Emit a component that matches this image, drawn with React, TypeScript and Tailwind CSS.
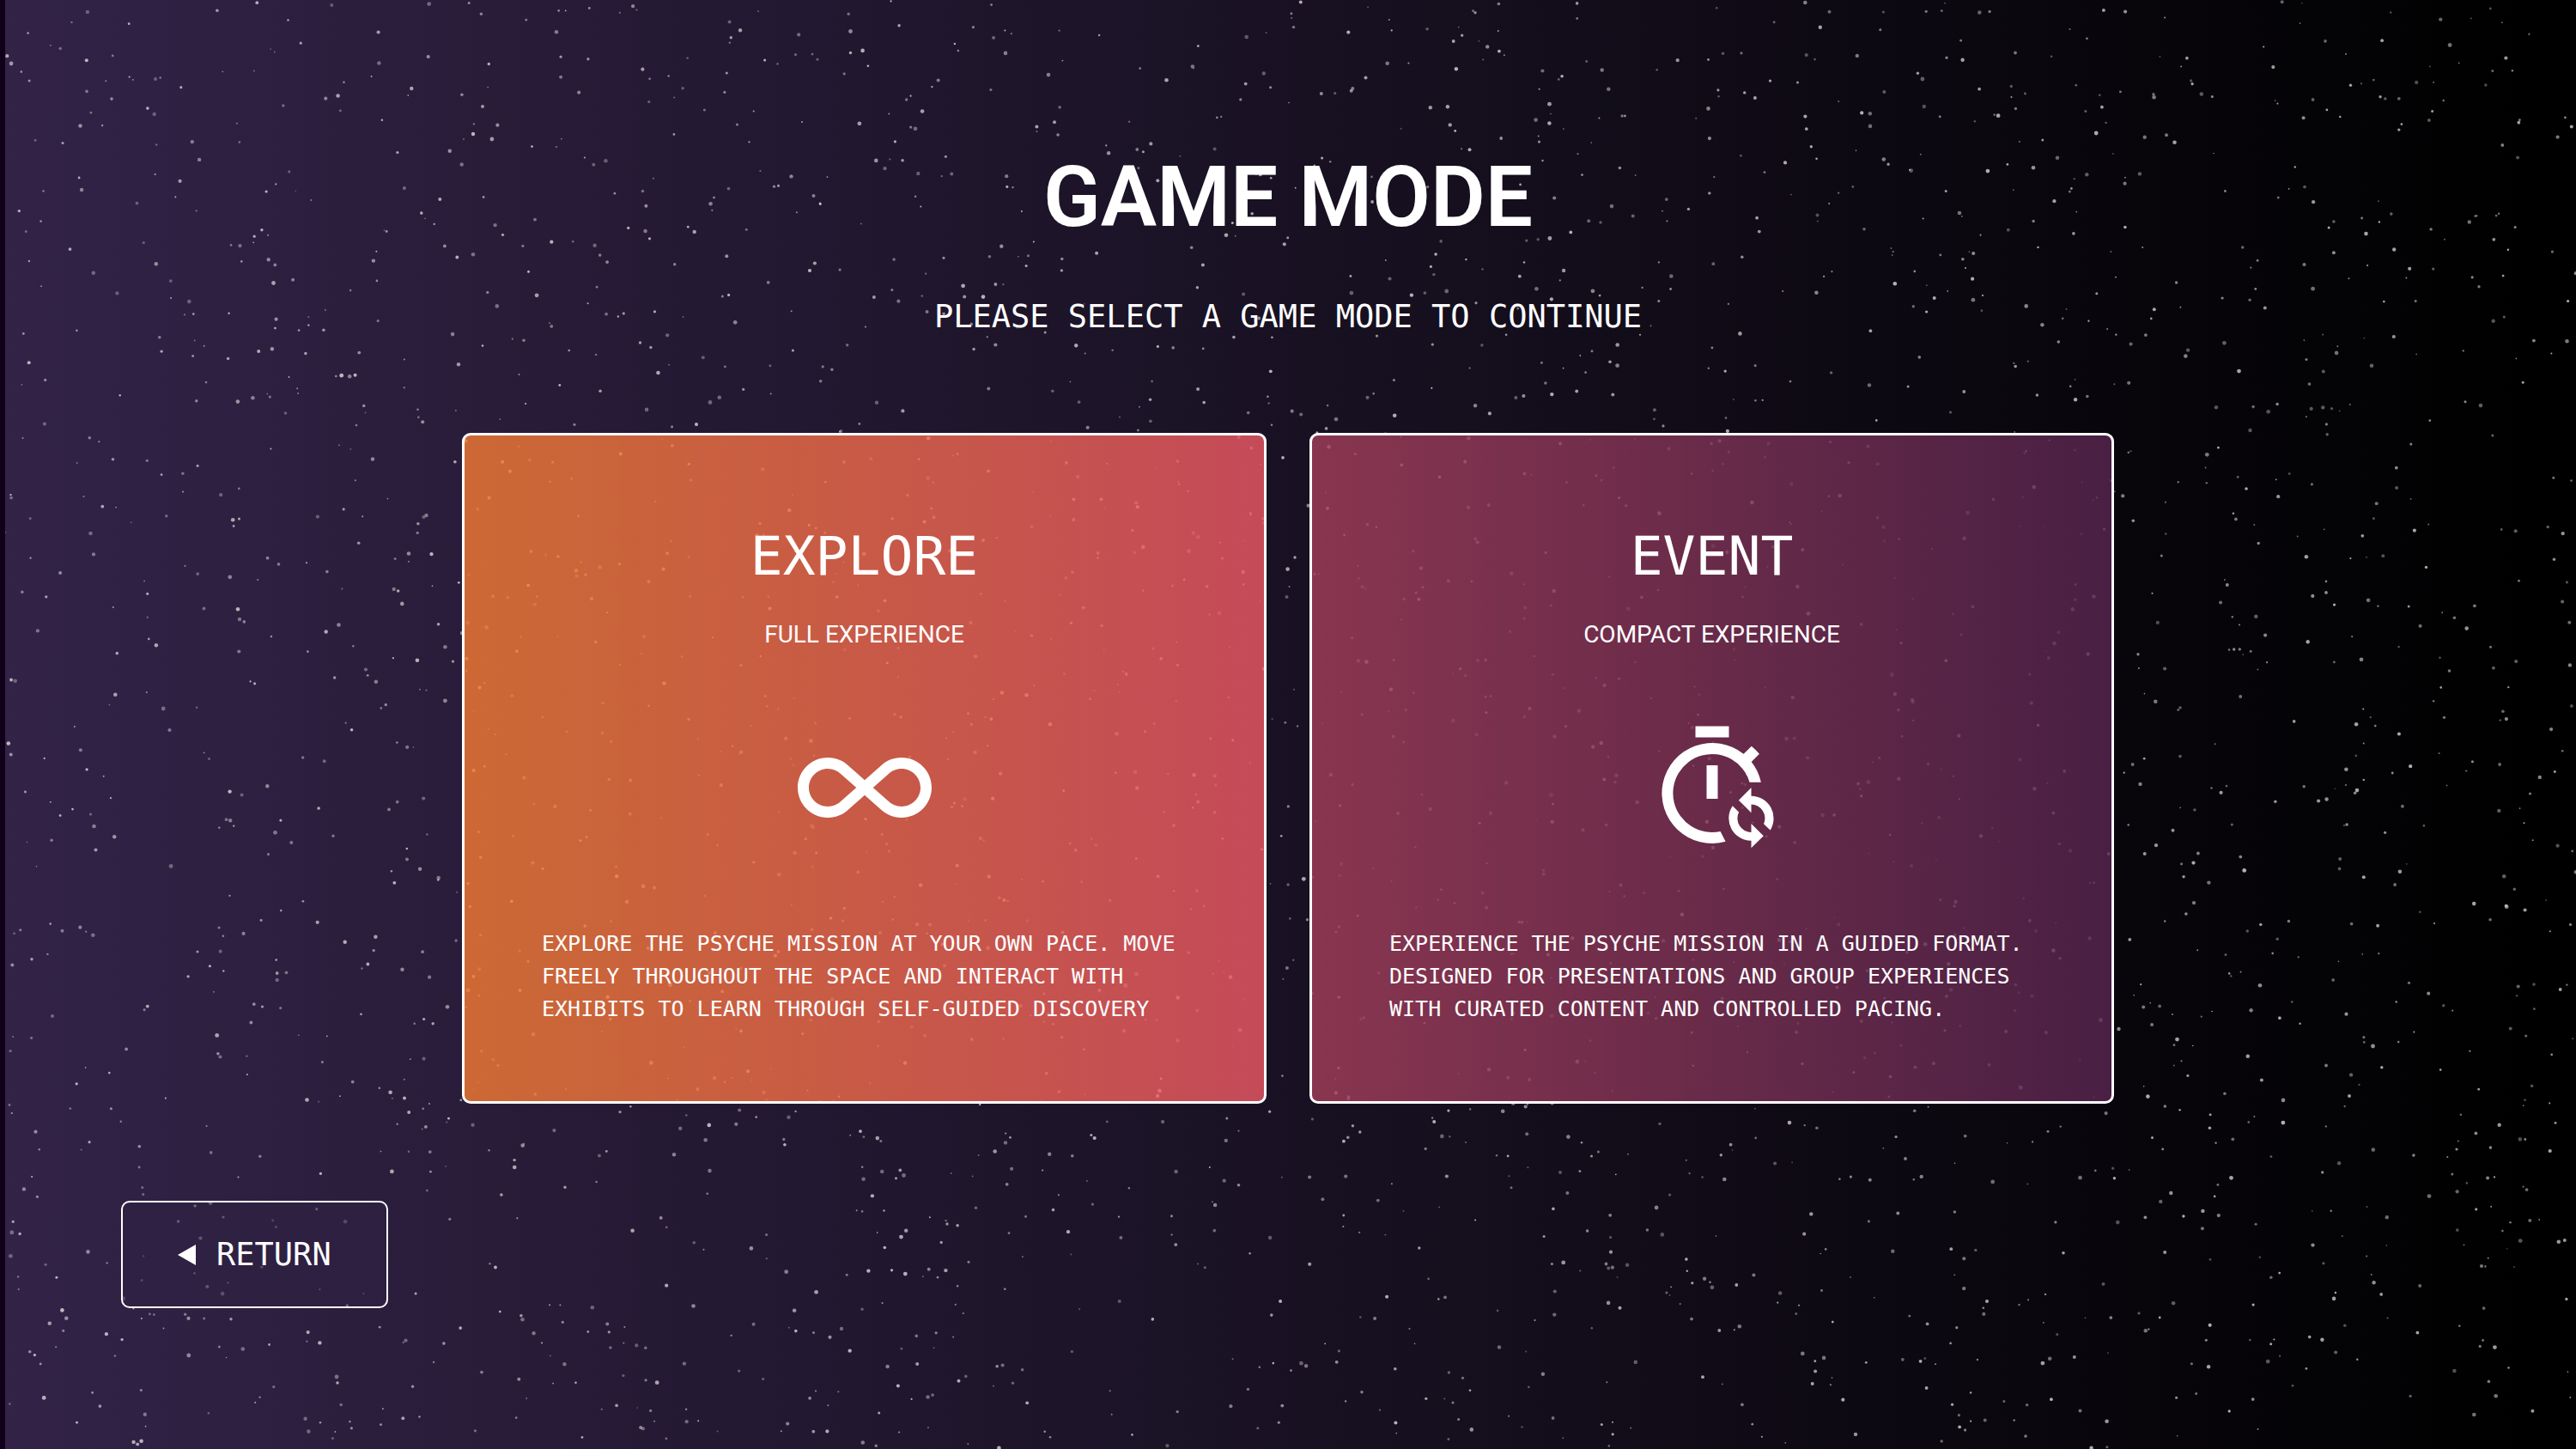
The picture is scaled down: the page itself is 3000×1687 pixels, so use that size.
import type { ReactNode } from "react";

type Star = { x: number; y: number; r: number; o: number };

const SKY_WIDTH = 3000;
const SKY_HEIGHT = 1687;

function makeStars(count: number): Star[] {
  let seed = 20260;
  const next = () => {
    seed = (seed * 1664525 + 1013904223) % 4294967296;
    return seed / 4294967296;
  };
  return Array.from({ length: count }, () => ({
    x: Math.round(next() * SKY_WIDTH * 10) / 10,
    y: Math.round(next() * SKY_HEIGHT * 10) / 10,
    r: Math.round((0.8 + next() * 1.6) * 10) / 10,
    o: Math.round((0.3 + next() * 0.4) * 100) / 100,
  }));
}

const stars = makeStars(3100);

function StarField() {
  return (
    <svg
      aria-hidden="true"
      className="pointer-events-none absolute inset-0 h-full w-full"
      viewBox={`0 0 ${SKY_WIDTH} ${SKY_HEIGHT}`}
      preserveAspectRatio="xMidYMid slice"
      fill="#fff8f6"
    >
      {stars.map((s, i) => (
        <circle key={i} cx={s.x} cy={s.y} r={s.r} opacity={s.o} />
      ))}
    </svg>
  );
}

function InfinityIcon() {
  return (
    <svg viewBox="0 0 24 24" className="size-[156px]" fill="currentColor" aria-hidden="true">
      <path d="M18.6 6.62C21.58 6.62 24 9 24 12C24 14.96 21.58 17.37 18.6 17.37C17.15 17.37 15.8 16.81 14.78 15.8L12 13.34L9.17 15.85C8.2 16.82 6.84 17.38 5.4 17.38C2.42 17.38 0 14.96 0 12C0 9.04 2.42 6.62 5.4 6.62C6.84 6.62 8.2 7.18 9.22 8.2L12 10.66L14.83 8.15C15.8 7.18 17.16 6.62 18.6 6.62M7.8 14.39L10.5 12L7.84 9.65C7.16 8.97 6.31 8.62 5.4 8.62C3.53 8.62 2 10.13 2 12C2 13.87 3.53 15.38 5.4 15.38C6.31 15.38 7.16 15.03 7.8 14.39M16.2 9.61L13.5 12L16.16 14.35C16.84 15.03 17.7 15.38 18.6 15.38C20.47 15.38 22 13.87 22 12C22 10.13 20.47 8.62 18.6 8.62C17.69 8.62 16.84 8.97 16.2 9.61Z" />
    </svg>
  );
}

function TimerSyncIcon() {
  return (
    <svg viewBox="0 0 24 24" className="size-[156px]" fill="currentColor" aria-hidden="true">
      <path d="M9 1h6v2H9z" />
      <path d="M11 8h2v6h-2z" />
      <path d="M20.75 11.03H18.7A7 7 0 1 0 13.47 19.84L14.4 21.67A9 9 0 1 1 17.62 5.98L19.04 4.56C19.55 4.98 20.02 5.46 20.45 5.97L19.03 7.39C19.85 8.45 20.47 9.68 20.75 11.03Z" />
      <path d="M19 12V13.5A4 4 0 0 1 22.4 19.62L21.24 18.5A2.5 2.5 0 0 0 19 15V16.5L16.75 14.25Z" />
      <path d="M19 22.8V21.5A4 4 0 0 1 15.65 15.27L16.78 16.4A2.5 2.5 0 0 0 19 20V18.45L21.2 20.65Z" />
    </svg>
  );
}

type ModeCardProps = {
  title: string;
  subtitle: string;
  description: string;
  icon: ReactNode;
  tone: string;
};

function ModeCard({ title, subtitle, description, icon, tone }: ModeCardProps) {
  return (
    <button
      type="button"
      className={`flex cursor-pointer flex-col items-center rounded-[10px] border-3 border-white px-[90px] pt-[109px] pb-[88px] ${tone}`}
    >
      <span className="font-['DejaVu_Sans_Mono',monospace] text-[63px] leading-[64px]">{title}</span>
      <span className="mt-[43px] font-[Roboto,sans-serif] text-[28px] leading-[32px]">{subtitle}</span>
      <span className="mt-[84px] block">{icon}</span>
      <span className="mt-[85px] block w-full text-left font-['DejaVu_Sans_Mono',monospace] text-[25px] leading-[38px]">
        {description}
      </span>
    </button>
  );
}

export default function App() {
  return (
    <div className="relative min-h-screen overflow-hidden bg-linear-to-r/srgb from-[#322347] to-black to-98% text-white">
      <StarField />
      <div aria-hidden="true" className="absolute inset-y-0 left-0 w-1.5 bg-[#12001a]" />
      <div className="relative flex flex-col">
        <header className="flex flex-col items-center pt-[182px] text-center">
          <h1 className="font-[Roboto,sans-serif] text-[98px] leading-[96px] font-semibold">GAME MODE</h1>
          <p className="mt-[67px] font-['DejaVu_Sans_Mono',monospace] text-[37px] leading-[48px]">
            PLEASE SELECT A GAME MODE TO CONTINUE
          </p>
        </header>
        <main className="mx-auto mt-[111px] grid w-full max-w-[1924px] grid-cols-2 gap-[50px]">
          <ModeCard
            title="EXPLORE"
            subtitle="FULL EXPERIENCE"
            description="EXPLORE THE PSYCHE MISSION AT YOUR OWN PACE. MOVE FREELY THROUGHOUT THE SPACE AND INTERACT WITH EXHIBITS TO LEARN THROUGH SELF-GUIDED DISCOVERY"
            icon={<InfinityIcon />}
            tone="bg-linear-to-r/srgb from-[#f47c33]/80 to-[#ef5966]/80"
          />
          <ModeCard
            title="EVENT"
            subtitle="COMPACT EXPERIENCE"
            description="EXPERIENCE THE PSYCHE MISSION IN A GUIDED FORMAT. DESIGNED FOR PRESENTATIONS AND GROUP EXPERIENCES WITH CURATED CONTENT AND CONTROLLED PACING."
            icon={<TimerSyncIcon />}
            tone="bg-linear-to-r/srgb from-[#a53f5b]/80 to-[#592651]/80"
          />
        </main>
        <footer className="px-[141px] pt-[113px] pb-16">
          <button
            type="button"
            className="flex cursor-pointer items-center gap-6 rounded-[10px] border-2 border-white bg-[#302144]/50 px-16 py-[38px] font-['DejaVu_Sans_Mono',monospace] text-[37px] leading-[45px]"
          >
            <svg viewBox="0 0 21 24" className="h-6 w-[21px]" fill="currentColor" aria-hidden="true">
              <path d="M21 0v24L0 12z" />
            </svg>
            RETURN
          </button>
        </footer>
      </div>
    </div>
  );
}
